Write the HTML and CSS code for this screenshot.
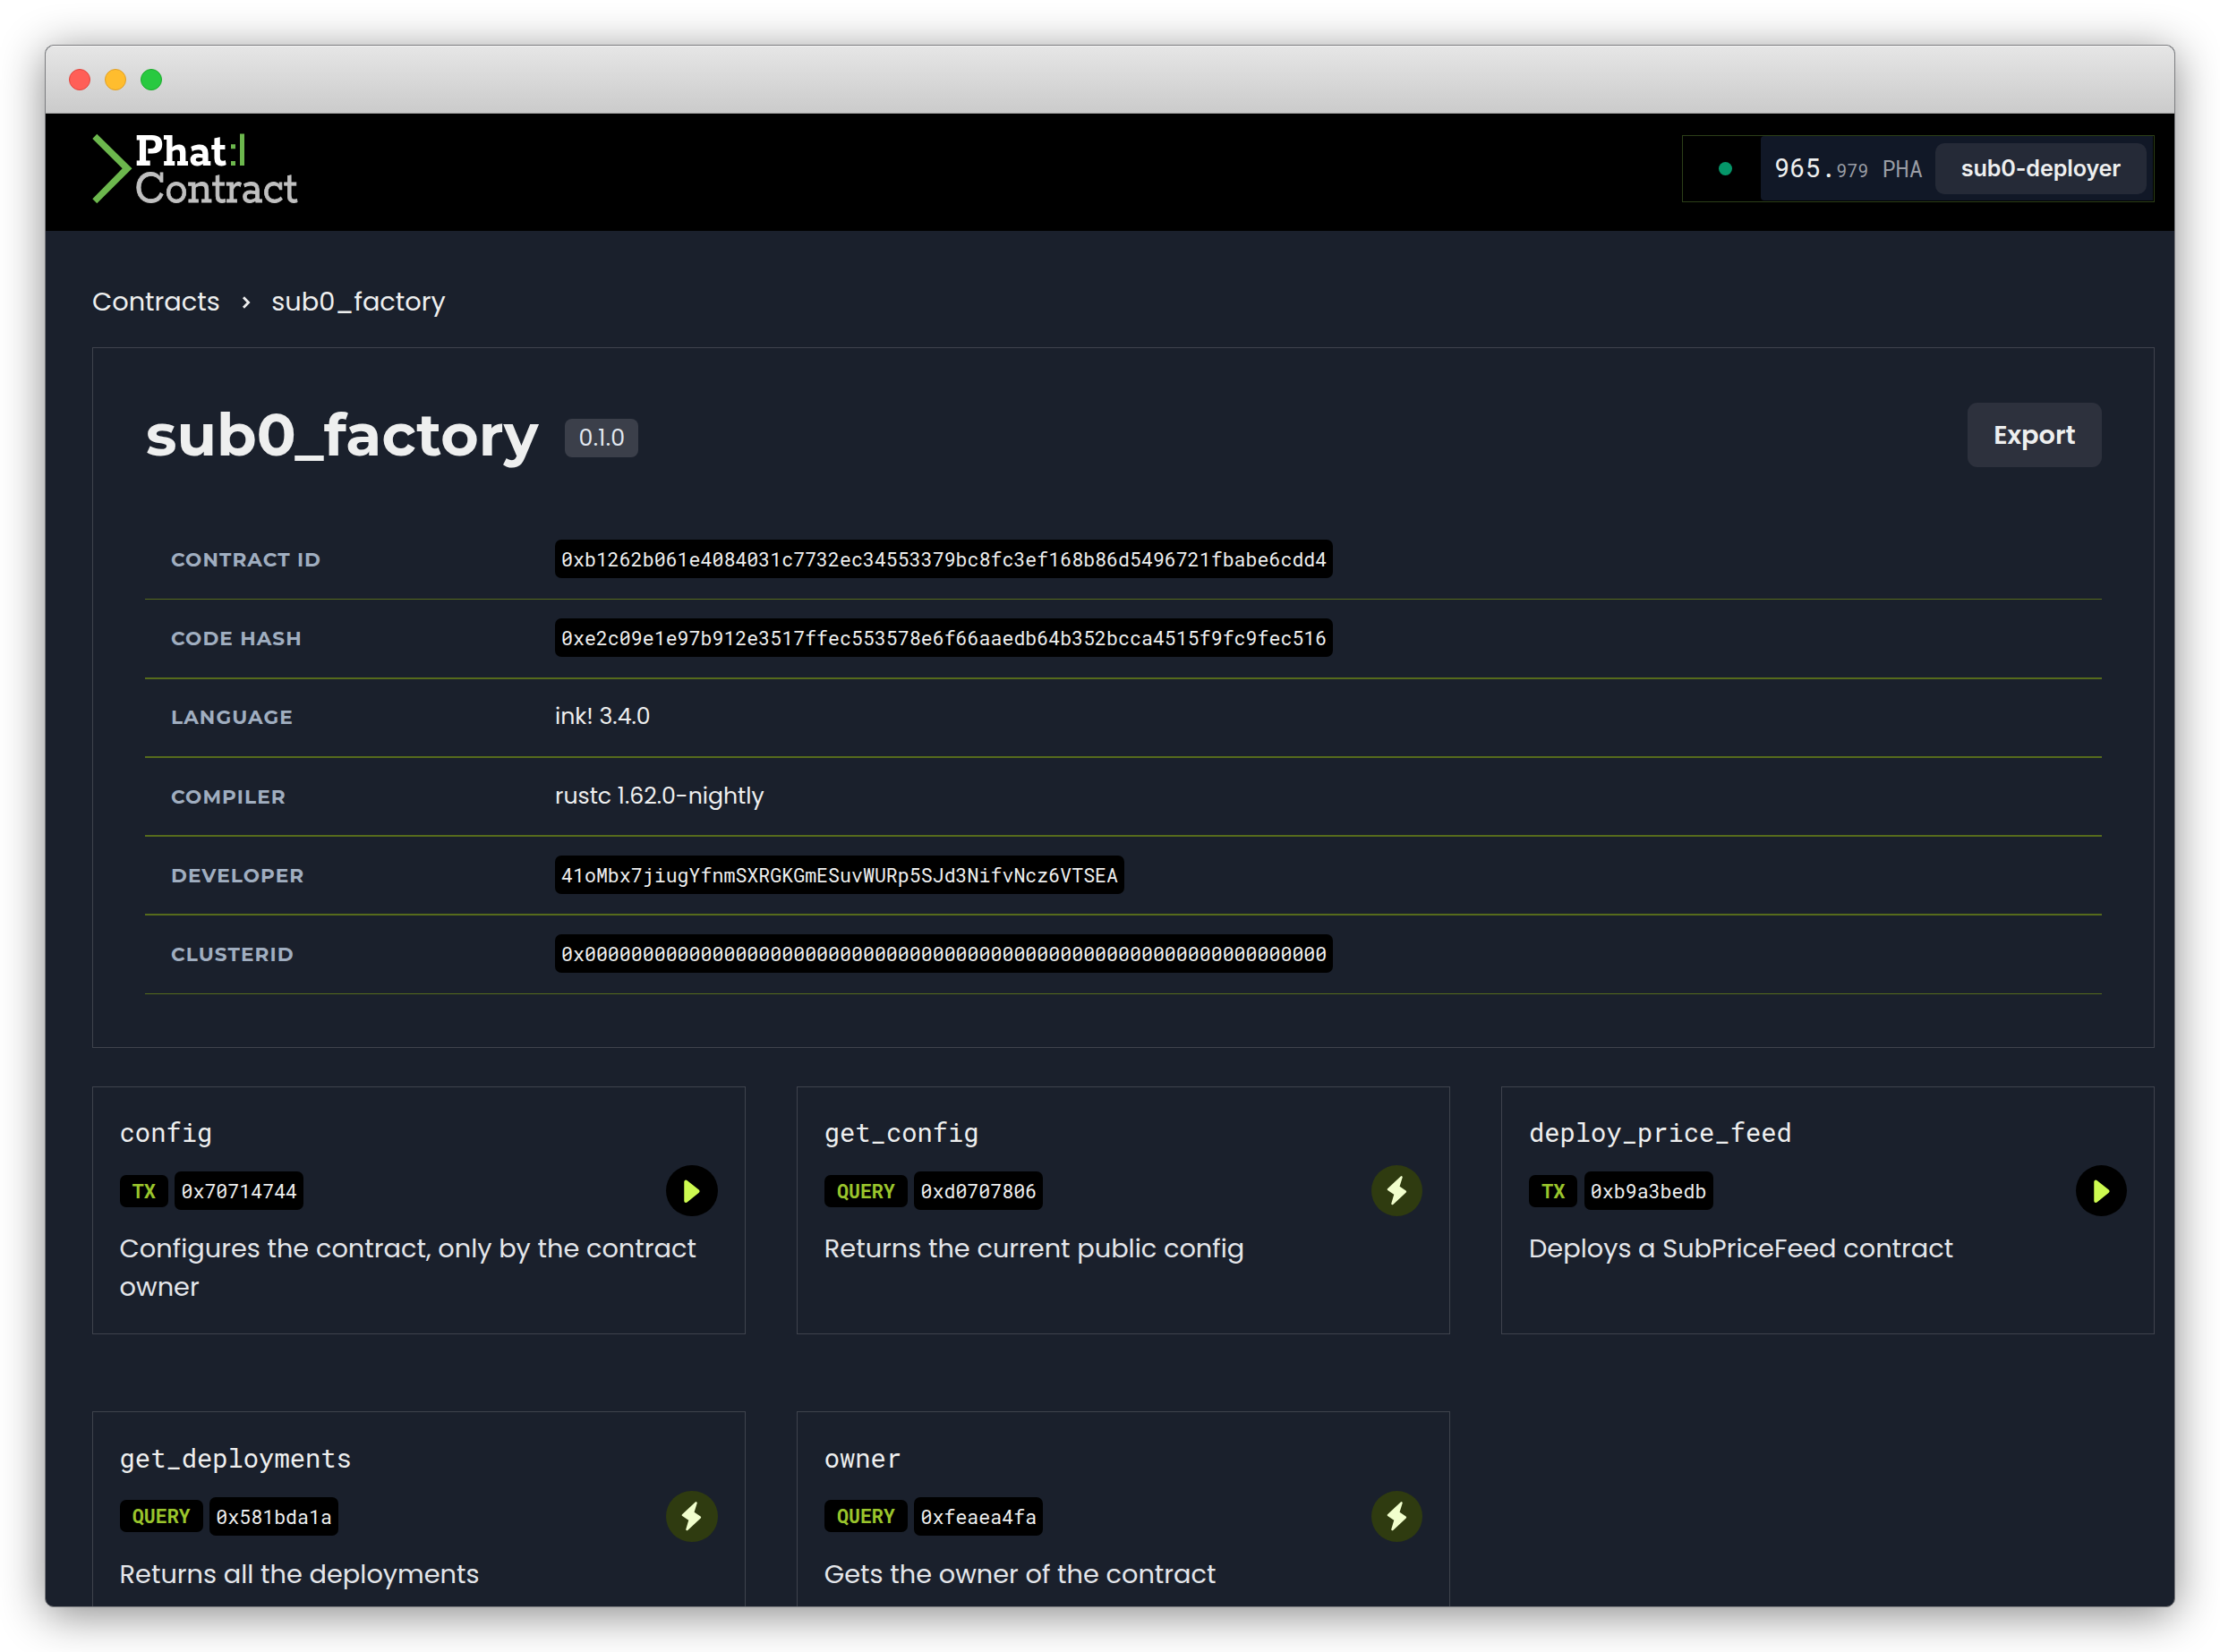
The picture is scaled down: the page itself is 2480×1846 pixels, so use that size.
FILE: index.html
```html
<!DOCTYPE html>
<html lang="en">
<head>
<meta charset="utf-8">
<title>sub0_factory - Phat Contract</title>
<link rel="stylesheet" href="styles.css">
</head>
<body>
<svg class="sprite" aria-hidden="true">
  <symbol id="play" viewBox="0 0 58 58"><path d="M22.4 18.8 V40.2 L35.8 29.3 Z" fill="#cdfa50" stroke="#cdfa50" stroke-width="4" stroke-linejoin="round"/></symbol>
  <symbol id="bolt" viewBox="0 0 58 58"><path d="M33.8 13.4 L19 27.2 L26.8 32.6 L23.6 43.4 L38.2 29.8 L30.4 24.4 Z" fill="#f1ffcd" stroke="#f1ffcd" stroke-width="2.4" stroke-linejoin="round"/></symbol>
</svg>
<div class="window">
  <div class="titlebar"><i class="light red"></i><i class="light yellow"></i><i class="light green"></i></div>
  <header class="navbar">
    <svg class="logo" viewBox="0 0 232 84" width="232" height="84">
      <path d="M0.3 8 L5.3 2.7 L44.5 41.3 L5.3 80.3 L0.3 75.3 L33.7 41.3 Z" fill="#6cb74d"/>
      <text class="logo-phat" x="48" y="37.6" textLength="102" lengthAdjust="spacingAndGlyphs">Phat</text>
      <path d="M155 14.3h5v5h-5zM155 33h5v5h-5zM165 2.4h5V38h-5z" fill="#6cb74d"/>
      <text class="logo-contract" x="47.5" y="79" textLength="182" lengthAdjust="spacingAndGlyphs">Contract</text>
    </svg>
    <div class="account">
      <div class="status"><i class="dot"></i></div>
      <div class="wallet">
        <div class="balance">965.<span class="decimals">979</span><span class="unit">PHA</span></div>
        <button class="account-name">sub0-deployer</button>
      </div>
    </div>
  </header>
  <main class="content">
    <nav class="breadcrumb">
      <span>Contracts</span>
      <svg width="10" height="16" viewBox="0 0 10 16"><path d="M2 2.2 L7.6 8 L2 13.8" fill="none" stroke="#eee" stroke-width="2.8"/></svg>
      <span>sub0_factory</span>
    </nav>
    <section class="panel">
      <div class="panel-head">
        <h1>sub0_factory</h1>
        <span class="version">0.1.0</span>
        <button class="export">Export</button>
      </div>
      <dl class="info">
        <div class="row"><dt>CONTRACT ID</dt><dd><code>0xb1262b061e4084031c7732ec34553379bc8fc3ef168b86d5496721fbabe6cdd4</code></dd></div>
        <div class="row"><dt>CODE HASH</dt><dd><code>0xe2c09e1e97b912e3517ffec553578e6f66aaedb64b352bcca4515f9fc9fec516</code></dd></div>
        <div class="row"><dt>LANGUAGE</dt><dd>ink! 3.4.0</dd></div>
        <div class="row"><dt>COMPILER</dt><dd>rustc 1.62.0-nightly</dd></div>
        <div class="row"><dt>DEVELOPER</dt><dd><code>41oMbx7jiugYfnmSXRGKGmESuvWURp5SJd3NifvNcz6VTSEA</code></dd></div>
        <div class="row"><dt>CLUSTERID</dt><dd><code>0x0000000000000000000000000000000000000000000000000000000000000000</code></dd></div>
      </dl>
    </section>
    <section class="cards">
      <article class="card">
        <h2>config</h2>
        <div class="meta"><span class="tag">TX</span><code>0x70714744</code><button class="run tx"><svg><use href="#play"/></svg></button></div>
        <p>Configures the contract, only by the contract owner</p>
      </article>
      <article class="card">
        <h2>get_config</h2>
        <div class="meta"><span class="tag">QUERY</span><code>0xd0707806</code><button class="run query"><svg><use href="#bolt"/></svg></button></div>
        <p>Returns the current public config</p>
      </article>
      <article class="card">
        <h2>deploy_price_feed</h2>
        <div class="meta"><span class="tag">TX</span><code>0xb9a3bedb</code><button class="run tx"><svg><use href="#play"/></svg></button></div>
        <p>Deploys a SubPriceFeed contract</p>
      </article>
      <article class="card">
        <h2>get_deployments</h2>
        <div class="meta"><span class="tag">QUERY</span><code>0x581bda1a</code><button class="run query"><svg><use href="#bolt"/></svg></button></div>
        <p>Returns all the deployments</p>
      </article>
      <article class="card">
        <h2>owner</h2>
        <div class="meta"><span class="tag">QUERY</span><code>0xfeaea4fa</code><button class="run query"><svg><use href="#bolt"/></svg></button></div>
        <p>Gets the owner of the contract</p>
      </article>
    </section>
  </main>
</div>
</body>
</html>
```
FILE: styles.css
```css
* { box-sizing: border-box; margin: 0; padding: 0; }
body {
  height: 1846px;
  padding: 50px;
  background: #fff;
  overflow: hidden;
  font-family: Poppins, Inter, sans-serif;
  font-size: 28.8px;
  line-height: 43.2px;
  color: #eeefef;
}
button { border: 0; font: inherit; color: inherit; }
.sprite { display: none; }

.window {
  height: 1746px;
  border: 1px solid #7c7d80;
  border-radius: 10px;
  background: #1a202c;
  overflow: hidden;
  box-shadow: 0 8px 50px rgba(0, 0, 0, .47);
}
.titlebar {
  height: 76px;
  padding-left: 26px;
  display: flex;
  align-items: center;
  gap: 16px;
  border-bottom: 1px solid #a3a3a3;
  background: linear-gradient(#e6e6e6, #cbcbcb);
  box-shadow: inset 0 1px #f4f4f4;
}
.light { width: 24px; height: 24px; border-radius: 50%; border: 1px solid; }
.red { background: #ff5f57; border-color: #e2463f; }
.yellow { background: #ffbd2e; border-color: #e0a028; }
.green { background: #28c940; border-color: #1dab2c; }

.navbar {
  height: 131px;
  padding: 20px 22px 0 52px;
  display: flex;
  align-items: flex-start;
  justify-content: space-between;
  background: #000;
}
.logo { display: block; overflow: visible; }
.logo text { font-family: Rokkitt, "Roboto Slab", "DejaVu Serif", serif; }
.logo-phat { font-size: 58px; font-weight: 700; fill: #fff; }
.logo-contract { font-size: 55px; font-weight: 400; fill: #c0c0c0; stroke: #c0c0c0; stroke-width: .8px; }
.account {
  width: 528px;
  height: 75px;
  margin-top: 4px;
  padding-right: 1px;
  display: flex;
  border: 1px solid #2c3f18;
}
.status { width: 87px; display: flex; align-items: center; justify-content: center; padding-left: 7px; }
.dot { width: 15px; height: 15px; border-radius: 50%; background: #059669; }
.wallet {
  flex: 1;
  height: 72px;
  padding: 0 7px 0 15px;
  display: flex;
  align-items: center;
  justify-content: space-between;
  border-radius: 4px 0 0 4px;
  background: #111827;
}
.balance { padding-top: 2px; font-family: "Roboto Mono", monospace; display: flex; align-items: baseline; }
.decimals { font-size: 20.16px; color: #9a9da5; }
.unit { margin-left: 15px; font-size: 25.2px; color: #9a9da5; }
.account-name {
  width: 236px;
  height: 57px;
  border-radius: 10px;
  background: #252a37;
  font: 600 25.2px/57px Inter, sans-serif;
  letter-spacing: -.15px;
  text-align: center;
}

.content { padding: 58px 22px 0 52px; }
.breadcrumb { display: flex; align-items: center; height: 43px; }
.breadcrumb svg { margin: 1px 23px 0 24.5px; }

.panel { height: 783px; margin-top: 29px; padding: 61px 58px 0; border: 1px solid #3f434d; }
.panel-head { height: 72px; display: flex; align-items: center; }
h1 { padding-left: 1px; font: 700 64.8px/72px Montserrat, Poppins, sans-serif; }
.version {
  width: 82px;
  height: 43px;
  margin: 7px 0 0 30px;
  border-radius: 8px;
  background: #3b3f4a;
  font-size: 25.2px;
  font-weight: 400;
  line-height: 43px;
  letter-spacing: .3px;
  text-align: center;
  color: #e2e8f0;
}
.export {
  width: 150px;
  height: 72px;
  margin-left: auto;
  padding-top: 1px;
  border-radius: 11px;
  background: #2d313d;
  font-weight: 600;
}
.info { margin-top: 60px; }
.row {
  height: 88px;
  padding: 21px 29px 0;
  display: flex;
  border-bottom: 2px solid #566b1c;
  font-size: 25.2px;
  line-height: 43px;
}
.row:first-child, .row:last-child { border-bottom-width: 1px; }
.row:nth-child(2) { height: 89px; }
.row:nth-child(3) { padding-top: 20px; }
dt {
  width: 429px;
  padding-top: 1px;
  font: 700 21.6px/43px Montserrat, Poppins, sans-serif;
  letter-spacing: 1.1px;
  color: #a0aec0;
}
code {
  display: block;
  height: 43px;
  padding: 0 7px;
  border-radius: 7px;
  background: #000;
  font: 21.6px/43px "Roboto Mono", monospace;
}

.cards {
  margin-top: 43px;
  display: grid;
  grid-template-columns: repeat(3, 1fr);
  gap: 86.4px 57.6px;
}
.card { height: 277px; padding: 29.2px 29.6px 0; border: 1px solid #3f434d; }
.card:nth-child(n+4) { padding-top: 29.6px; }
h2 { font: 400 28.8px/43.2px "Roboto Mono", monospace; }
.meta { height: 57.6px; margin: 14.4px 0; display: flex; align-items: center; gap: 7.4px; }
.meta code { padding: 0 7.2px; }
.tag {
  height: 36px;
  padding: 0 14.2px;
  border-radius: 7px;
  background: #000;
  font: 700 21.6px/36px "Roboto Mono", monospace;
  color: #9ac52c;
}
.run { width: 57.6px; height: 57.6px; margin-left: auto; border-radius: 50%; }
.run svg { display: block; width: 100%; height: 100%; }
.tx { background: #000; }
.query { background: #2f3b10; }
.card p { color: #e4e6ea; }
```
